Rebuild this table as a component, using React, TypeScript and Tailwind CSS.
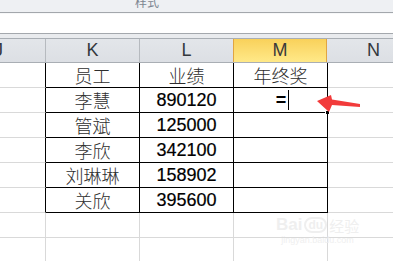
import React from "react";

const cjk = '"Noto Sans CJK SC", "Noto Sans", sans-serif';
const latin = '"Liberation Sans", Arial, sans-serif';

const rows = [
  ["员工", "业绩", "年终奖"],
  ["李慧", "890120", "="],
  ["管斌", "125000", ""],
  ["李欣", "342100", ""],
  ["刘琳琳", "158902", ""],
  ["关欣", "395600", ""],
  ["", "", ""],
  ["", "", ""],
];

function HeaderCell({ label, active }: { label: string; active?: boolean }) {
  if (active) {
    return (
      <div className="h-full w-[94px] shrink-0 border-x border-[#e1a542] bg-gradient-to-b from-[#f9d15a] to-[#ffe988] flex items-center justify-center text-[18px] text-[#3a3a3a] -ml-px">
        {label}
      </div>
    );
  }
  return (
    <div className="h-full w-[94px] shrink-0 border-r border-[#b6babf] bg-gradient-to-b from-[#e3e6ea] to-[#dcdfe4] flex items-center justify-center text-[18px] text-[#34383d]">
      {label}
    </div>
  );
}

export default function App() {
  return (
    <div className="relative w-[393px] h-[261px] overflow-hidden bg-white" style={{ fontFamily: latin }}>
      {/* ribbon strip */}
      <div className="h-[12px] bg-[#eef0f3] overflow-hidden relative">
        <div className="w-[294px] flex justify-center -mt-[7px]">
          <span className="text-[12px] text-[#7c8590]" style={{ fontFamily: cjk }}>样式</span>
        </div>
      </div>
      <div className="h-px bg-[#a3a7ac]" />
      <div className="h-px bg-[#f7f8f9]" />
      {/* formula bar */}
      <div className="h-[20px] bg-white border-b border-[#a4a8ad]" />
      <div className="h-[4px] bg-[#e9ebee]" />

      {/* column headers */}
      <div className="h-[25px] flex border-y border-[#a9aeb4] -ml-[48px] overflow-hidden">
        <HeaderCell label="J" />
        <HeaderCell label="K" />
        <HeaderCell label="L" />
        <HeaderCell label="M" active />
        <HeaderCell label="N" />
      </div>

      {/* grid */}
      <div className="flex flex-col -ml-[48px]">
        {rows.map((r, i) => {
          const inTable = i < 6;
          const edge = i < 6 ? "border-black" : "border-[#d9d9d9]";
          const bottom = i < 6 ? "border-b-black" : "border-b-[#d9d9d9]";
          return (
            <div key={i} className="flex h-[25px]">
              {/* J */}
              <div className={`w-[94px] shrink-0 border-b border-r border-b-[#d9d9d9] ${inTable ? "border-r-black" : "border-r-[#d9d9d9]"}`} />
              {/* K */}
              <div
                className={`w-[94px] shrink-0 border-b border-r ${edge} ${bottom} flex items-center justify-center text-[18px] text-[#2e2e2e] font-light`}
                style={{ fontFamily: cjk }}
              >
                {r[0]}
              </div>
              {/* L */}
              <div
                className={`w-[94px] shrink-0 border-b border-r ${edge} ${bottom} flex items-center justify-center ${i === 0 ? "text-[18px] text-[#2e2e2e] font-light" : "text-[18px] text-black pt-px [-webkit-text-stroke:0.2px_black]"}`}
                style={{ fontFamily: i === 0 ? cjk : latin }}
              >
                {r[1]}
              </div>
              {/* M */}
              <div
                className={`relative w-[94px] shrink-0 border-b border-r ${edge} ${bottom} flex items-center justify-center text-[18px] ${i === 0 ? "text-[#2e2e2e] font-light" : "text-black"}`}
                style={{ fontFamily: i === 0 ? cjk : latin }}
              >
                {i === 1 ? (
                  <span className="flex items-center pl-[4px]">
                    <span className="font-bold">=</span>
                    <span className="ml-[2px] w-px h-[20px] bg-black" />
                  </span>
                ) : (
                  r[2]
                )}
                {i === 1 && <span className="absolute -right-[3px] -bottom-[3px] w-[5px] h-[5px] bg-black border border-white" />}
              </div>
              {/* N */}
              <div className="w-[94px] shrink-0 border-b border-r border-[#d9d9d9]" />
            </div>
          );
        })}
      </div>

      {/* red annotation arrow */}
      <svg className="absolute left-0 top-0" width="393" height="261" viewBox="0 0 393 261">
        <polygon
          points="317,101 331,95 332,99.5 360,104 360,107 332,105 329,112"
          fill="#f23b3b"
        />
      </svg>

      {/* faint watermark */}
      <div className="absolute left-[276px] top-[216px] flex flex-col items-center text-[#efefef] leading-none">
        <div className="flex items-end gap-[2px]">
          <span className="text-[17px] font-bold" style={{ fontFamily: latin }}>Bai</span>
          <span className="text-[12px] font-bold rounded-full border-2 border-[#efefef] px-[2px]" style={{ fontFamily: latin }}>du</span>
          <span className="text-[15px]" style={{ fontFamily: cjk }}>经验</span>
        </div>
        <span className="text-[9px] mt-[3px]" style={{ fontFamily: latin }}>jingyan.baidu.com</span>
      </div>
    </div>
  );
}
